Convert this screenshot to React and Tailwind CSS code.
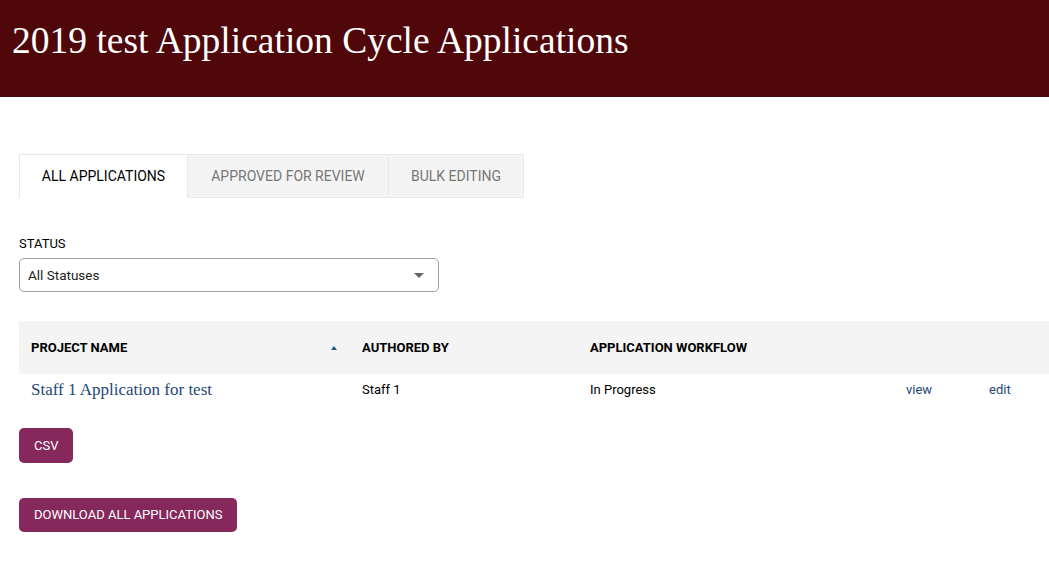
import React from "react";

const sans = { fontFamily: '"Roboto", "Liberation Sans", sans-serif' };
const serif = { fontFamily: '"Liberation Serif", serif' };

const tabs = ["All Applications", "Approved for Review", "Bulk Editing"];

const App = () => {
  return (
    <div className="min-h-[568px] bg-white" style={sans}>
      <header className="h-[97px] bg-[#4f070a] flex items-center px-3">
        <h1 className="text-[37.5px] text-white leading-none -mt-[16px]" style={serif}>
          2019 test Application Cycle Applications
        </h1>
      </header>

      <main className="pt-[57px] pl-[19px]">
        <div className="flex h-[44px] w-[505px] text-[14px] uppercase">
          {tabs.map((tab, i) => (
            <div
              key={tab}
              className={
                i === 0
                  ? "w-[169px] flex items-center justify-center border-t border-l border-r border-[#e8e8e8] text-black"
                  : i === 1
                  ? "w-[200px] flex items-center justify-center bg-[#f4f4f4] border-t border-b border-[#e8e8e8] text-[#777]"
                  : "w-[136px] flex items-center justify-center bg-[#f4f4f4] border-t border-b border-r border-l border-[#e8e8e8] text-[#777]"
              }
            >
              {tab}
            </div>
          ))}
        </div>

        <div className="mt-[39px]">
          <div className="text-[13px] text-black uppercase leading-none">Status</div>
          <div className="mt-[8px] w-[420px] h-[34px] border border-[#a0a0a0] rounded-[5px] flex items-center justify-between pl-[8px] pr-[14px] text-[13.5px] text-[#222]">
            <span>All Statuses</span>
            <span className="w-0 h-0 border-l-[5px] border-r-[5px] border-t-[5px] border-l-transparent border-r-transparent border-t-[#666]" />
          </div>
        </div>

        <table className="mt-[29px] w-[1030px] border-collapse text-[13px]">
          <thead>
            <tr className="bg-[#f4f4f4] h-[53px] text-left font-bold text-black uppercase">
              <th className="pl-[12px] w-[343px]">
                <div className="flex items-center justify-between pr-[25px]">
                  <span>Project Name</span>
                  <span className="w-0 h-0 border-l-[3px] border-r-[3px] border-b-[4px] border-l-transparent border-r-transparent border-b-[#1d5a86]" />
                </div>
              </th>
              <th className="w-[228px]">Authored By</th>
              <th className="w-[316px]">Application Workflow</th>
              <th className="w-[83px]"></th>
              <th></th>
            </tr>
          </thead>
          <tbody>
            <tr className="h-[31px] text-black">
              <td className="pl-[12px] text-[17px] text-[#264878]" style={serif}>
                Staff 1 Application for test
              </td>
              <td>Staff 1</td>
              <td>In Progress</td>
              <td className="text-[#264878]">view</td>
              <td className="text-[#264878]">edit</td>
            </tr>
          </tbody>
        </table>

        <button className="mt-[23px] h-[35px] px-[15px] rounded-[5px] bg-[#85285c] text-white text-[13px] uppercase block">
          CSV
        </button>
        <button className="mt-[35px] h-[34px] px-[15px] rounded-[5px] bg-[#85285c] text-white text-[13px] uppercase block">
          Download All Applications
        </button>
      </main>
    </div>
  );
};

export default App;
